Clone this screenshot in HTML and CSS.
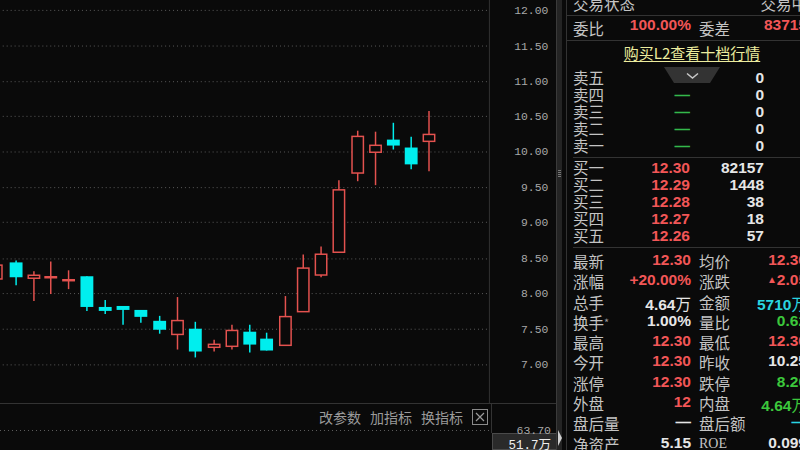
FILE: index.html
```html
<!DOCTYPE html>
<html lang="zh-CN">
<head>
    <meta charset="UTF-8">
    <meta name="viewport" content="width=device-width, initial-scale=1.0">
    <title>日K线</title>
    <link rel="stylesheet" href="styles.css">
</head>
<body>
<div class="screen">
    <div class="chart">
        <svg class="kline" width="556" height="407" viewBox="0 0 556 407">
            <!-- price grid, 0.50 per step -->
            <g class="grid">
                <line x1="0" y1="10.5" x2="491" y2="10.5"/>
                <line x1="0" y1="46.5" x2="491" y2="46.5"/>
                <line x1="0" y1="82.5" x2="491" y2="82.5"/>
                <line x1="0" y1="117.5" x2="491" y2="117.5"/>
                <line x1="0" y1="153.5" x2="491" y2="153.5"/>
                <line x1="0" y1="189.5" x2="491" y2="189.5"/>
                <line x1="0" y1="224.5" x2="491" y2="224.5"/>
                <line x1="0" y1="261.5" x2="491" y2="261.5"/>
                <line x1="0" y1="296.5" x2="491" y2="296.5"/>
                <line x1="0" y1="332.5" x2="491" y2="332.5"/>
                <line x1="0" y1="368.5" x2="491" y2="368.5"/>
            </g>
            <line class="edge" x1="491.5" y1="0" x2="491.5" y2="407"/>
            <g class="axis">
                <text x="551" y="14">12.00</text>
                <text x="551" y="50">11.50</text>
                <text x="551" y="86">11.00</text>
                <text x="551" y="121">10.50</text>
                <text x="551" y="157">10.00</text>
                <text x="551" y="193">9.50</text>
                <text x="551" y="228">9.00</text>
                <text x="551" y="265">8.50</text>
                <text x="551" y="300">8.00</text>
                <text x="551" y="336">7.50</text>
                <text x="551" y="372">7.00</text>
            </g>

            <!-- falling days -->
            <g class="down">
                <line x1="13.5" y1="263" x2="13.5" y2="288"/><rect x="7" y="265" width="13" height="15"/>
                <line x1="85" y1="279" x2="85" y2="314"/><rect x="78.5" y="279" width="13" height="31"/>
                <line x1="103.5" y1="303" x2="103.5" y2="317"/><rect x="97" y="310" width="13" height="4"/>
                <line x1="121.5" y1="309" x2="121.5" y2="328"/><rect x="115" y="309" width="13" height="4"/>
                <line x1="139.5" y1="313" x2="139.5" y2="326"/><rect x="133" y="313" width="13" height="7"/>
                <line x1="158.5" y1="319" x2="158.5" y2="337"/><rect x="152" y="324" width="13" height="9"/>
                <line x1="194.5" y1="325" x2="194.5" y2="361"/><rect x="188" y="332" width="13" height="23"/>
                <line x1="249.5" y1="328" x2="249.5" y2="356"/><rect x="243" y="335" width="13" height="13"/>
                <line x1="266.5" y1="336" x2="266.5" y2="354"/><rect x="260" y="342" width="13" height="12"/>
                <line x1="394.5" y1="124" x2="394.5" y2="151"/><rect x="388" y="141" width="13" height="6"/>
                <line x1="412.5" y1="138" x2="412.5" y2="171"/><rect x="406" y="149" width="13" height="17"/>
            </g>

            <!-- rising days, hollow -->
            <g class="up">
                <line x1="-6.5" y1="262" x2="-6.5" y2="290"/><rect x="-12.25" y="267.75" width="11.5" height="14"/>
                <line x1="31.5" y1="274" x2="31.5" y2="304"/><rect x="25.75" y="278" width="11.5" height="3"/>
                <line x1="48.5" y1="264" x2="48.5" y2="297"/><rect x="42.75" y="279.5" width="11.5" height="1"/>
                <line x1="66.5" y1="273" x2="66.5" y2="292"/><rect x="60.75" y="282.5" width="11.5" height="1"/>
                <line x1="176.5" y1="300" x2="176.5" y2="353"/><rect x="170.75" y="323.75" width="11.5" height="14"/>
                <line x1="213.5" y1="343" x2="213.5" y2="355"/><rect x="207.75" y="347.75" width="11.5" height="3"/>
                <line x1="231.5" y1="328" x2="231.5" y2="353"/><rect x="225.75" y="333.75" width="11.5" height="16"/>
                <line x1="285.5" y1="299" x2="285.5" y2="349"/><rect x="279.75" y="319.75" width="11.5" height="29"/>
                <line x1="303.5" y1="257" x2="303.5" y2="315"/><rect x="297.75" y="270.75" width="11.5" height="44"/>
                <line x1="321.5" y1="249" x2="321.5" y2="280"/><rect x="315.75" y="256.75" width="11.5" height="21"/>
                <line x1="339.5" y1="182" x2="339.5" y2="255"/><rect x="333.75" y="191.75" width="11.5" height="63"/>
                <line x1="358.5" y1="132" x2="358.5" y2="183"/><rect x="352.75" y="137.75" width="11.5" height="37"/>
                <line x1="376.5" y1="133" x2="376.5" y2="187"/><rect x="370.75" y="146.75" width="11.5" height="7"/>
                <line x1="430.5" y1="112" x2="430.5" y2="173"/><rect x="424.75" y="135.75" width="11.5" height="7"/>
            </g>
        </svg>

        <div class="sub">
            <div class="sub-plot">
                <div class="tools">
                    <span>改参数</span>
                    <span>加指标</span>
                    <span>换指标</span>
                    <span class="close">
                        <svg width="14" height="14" viewBox="0 0 14 14"><path d="M3 3 L11 11 M11 3 L3 11"/></svg>
                    </span>
                </div>
                <div class="sub-grid"></div>
            </div>
            <div class="sub-axis">
                <div class="sub-val">63.70</div>
                <div class="vol-tag">51.7万</div>
            </div>
        </div>
    </div>

    <div class="splitter">
        <span class="grip"></span>
        <span class="fold"></span>
    </div>

    <div class="panel">
        <div class="status">
            <span>交易状态</span>
            <span>交易中</span>
        </div>
        <div class="quote ratio">
            <span class="lbl">委比</span><span class="num red">100.00%</span>
            <span class="lbl">委差</span><span class="num red">83715</span>
        </div>
        <div class="l2"><a class="l2-link">购买L2查看十档行情</a></div>

        <svg class="fold-tab" width="56" height="16" viewBox="0 0 56 16">
            <polygon points="0,0 56,0 46,16 10,16"/>
            <polyline points="23,6.5 28.5,11 34,6.5"/>
        </svg>

        <div class="book sell">
            <div class="level"><span class="lbl">卖五</span><span class="num green">—</span><span class="num white">0</span></div>
            <div class="level"><span class="lbl">卖四</span><span class="num green">—</span><span class="num white">0</span></div>
            <div class="level"><span class="lbl">卖三</span><span class="num green">—</span><span class="num white">0</span></div>
            <div class="level"><span class="lbl">卖二</span><span class="num green">—</span><span class="num white">0</span></div>
            <div class="level"><span class="lbl">卖一</span><span class="num green">—</span><span class="num white">0</span></div>
        </div>
        <div class="book buy">
            <div class="level"><span class="lbl">买一</span><span class="num red">12.30</span><span class="num white">82157</span></div>
            <div class="level"><span class="lbl">买二</span><span class="num red">12.29</span><span class="num white">1448</span></div>
            <div class="level"><span class="lbl">买三</span><span class="num red">12.28</span><span class="num white">38</span></div>
            <div class="level"><span class="lbl">买四</span><span class="num red">12.27</span><span class="num white">18</span></div>
            <div class="level"><span class="lbl">买五</span><span class="num red">12.26</span><span class="num white">57</span></div>
        </div>

        <div class="stats">
            <div class="quote"><span class="lbl">最新</span><span class="num red">12.30</span><span class="lbl">均价</span><span class="num red">12.30</span></div>
            <div class="quote"><span class="lbl">涨幅</span><span class="num red">+20.00%</span><span class="lbl">涨跌</span><span class="num red"><span class="tri">▲</span>2.05</span></div>
            <div class="quote"><span class="lbl">总手</span><span class="num white">4.64<span class="unit">万</span></span><span class="lbl">金额</span><span class="num cyan">5710<span class="unit">万</span></span></div>
            <div class="quote"><span class="lbl">换手<span class="star">*</span></span><span class="num white">1.00%</span><span class="lbl">量比</span><span class="num green">0.62</span></div>
            <div class="quote"><span class="lbl">最高</span><span class="num red">12.30</span><span class="lbl">最低</span><span class="num red">12.30</span></div>
            <div class="quote"><span class="lbl">今开</span><span class="num red">12.30</span><span class="lbl">昨收</span><span class="num white">10.25</span></div>
            <div class="quote"><span class="lbl">涨停</span><span class="num red">12.30</span><span class="lbl">跌停</span><span class="num green">8.20</span></div>
            <div class="quote"><span class="lbl">外盘</span><span class="num red">12</span><span class="lbl">内盘</span><span class="num green">4.64<span class="unit">万</span></span></div>
            <div class="quote"><span class="lbl">盘后量</span><span class="num white">—</span><span class="lbl">盘后额</span><span class="num cyan">—</span></div>
            <div class="quote"><span class="lbl">净资产</span><span class="num white">5.15</span><span class="lbl latin">ROE</span><span class="num white">0.099</span></div>
        </div>
    </div>
</div>
</body>
</html>
```

FILE: styles.css
```css
* {
    box-sizing: border-box;
}
html, body {
    margin: 0;
    height: 100%;
}
body {
    background: #0a0a0a;
    overflow: hidden;
    font-family: "Noto Sans CJK SC", sans-serif;
    color: #c4c4c4;
}
.screen {
    display: flex;
    width: 807px;
    height: 450px;
}

/* chart */
.chart {
    width: 556px;
    flex: none;
    display: flex;
    flex-direction: column;
}
.kline {
    display: block;
}
.grid line {
    stroke: #5c5c5c;
    stroke-dasharray: 1 3;
}
.edge {
    stroke: #333;
}
.axis text {
    fill: #a8a8a8;
    font: 11.5px "Liberation Mono", monospace;
    text-anchor: end;
}
.down line {
    stroke: #00eeee;
    stroke-width: 1.5;
}
.down rect {
    fill: #00eeee;
}
.up line,
.up rect {
    stroke: #e4524f;
    stroke-width: 1.5;
    fill: #0a0a0a;
}

.sub {
    flex: 1;
    display: flex;
    border-top: 1px solid #333;
}
.sub-plot {
    width: 492px;
    height: 29px;
    border-right: 1px solid #333;
}
.tools {
    height: 26px;
    display: flex;
    justify-content: flex-end;
    align-items: center;
    gap: 9px;
    padding-right: 3px;
    font-size: 14px;
    color: #9a9a9a;
}
.close {
    width: 16px;
    height: 16px;
    border: 1px solid #8a8a8a;
    display: flex;
    align-items: center;
    justify-content: center;
}
.close path {
    stroke: #9a9a9a;
    stroke-width: 1.2;
    fill: none;
}
.sub-grid {
    height: 1px;
    background: repeating-linear-gradient(to right, #5c5c5c 0 1px, transparent 1px 4px);
}
.sub-axis {
    width: 64px;
    padding-top: 20px;
}
.sub-val {
    height: 12px;
    line-height: 12px;
    padding-right: 5px;
    text-align: right;
    font: 11.5px "Liberation Mono", monospace;
    color: #a8a8a8;
}
.vol-tag {
    margin-top: -3px;
    height: 17px;
    line-height: 15px;
    padding-right: 5px;
    text-align: right;
    background: #2a2a2a;
    border: 1px solid #4a4a4a;
    border-right: none;
    font: 12.5px "Liberation Mono", "Noto Sans CJK SC", monospace;
    color: #eeeeee;
}

/* splitter between chart and quote panel */
.splitter {
    width: 6px;
    flex: none;
    display: flex;
    flex-direction: column;
    align-items: center;
    background: #242424;
    border-left: 1px solid #3a3a3a;
}
.grip {
    margin-top: 170px;
    width: 3px;
    height: 7px;
    background: repeating-linear-gradient(to bottom, #777 0 1px, transparent 1px 2px);
}
.fold {
    margin-top: auto;
    margin-bottom: 4px;
    width: 0;
    height: 0;
    border-left: 4px solid #cfcfcf;
    border-top: 8px solid transparent;
    border-bottom: 8px solid transparent;
}

/* quote panel */
.panel {
    position: relative;
    width: 241px;
    flex: none;
    margin-left: 4px;
    border-left: 1px solid #333;
}
.lbl {
    font-size: 15.5px;
    color: #c4c4c4;
    white-space: nowrap;
}
.lbl.latin {
    font-family: "Liberation Serif", serif;
    font-size: 14px;
}
.star {
    font-size: 11px;
    color: #999;
    vertical-align: top;
}
.num {
    font: bold 15.5px "Liberation Sans", "Noto Sans CJK SC", sans-serif;
    text-align: right;
    white-space: nowrap;
}
.unit {
    font-weight: normal;
}
.tri {
    font-size: 10px;
    vertical-align: 2px;
}
.red { color: #f25657; }
.white { color: #e6e6e6; }
.green { color: #3cc83c; }
.cyan { color: #2ad6e0; }
.book .green { color: #34b84c; }

.status {
    margin-top: -5px;
    height: 21px;
    line-height: 16px;
    padding-left: 6px;
    display: flex;
    justify-content: space-between;
    font-size: 15.5px;
    border-bottom: 1px solid #333;
}
/* label | value | label | value, the second pair set 8px apart */
.quote {
    display: grid;
    grid-template-columns: 50px 68px 66px 50px;
    padding-left: 6px;
    height: 20.3px;
    line-height: 20.3px;
}
.quote .lbl:nth-child(3) {
    padding-left: 8px;
}
.ratio {
    height: 25px;
    line-height: 24px;
    border-bottom: 1px solid #333;
}
.l2 {
    height: 26px;
    line-height: 22px;
    padding-left: 10px;
    text-align: center;
}
.l2-link {
    font-size: 15px;
    color: #ecec9e;
    text-decoration: underline;
    text-underline-offset: 2px;
    cursor: pointer;
}
.fold-tab {
    position: absolute;
    left: 97px;
    top: 67px;
    z-index: 1;
}
.fold-tab polygon {
    fill: #333;
}
.fold-tab polyline {
    fill: none;
    stroke: #c8c8c8;
    stroke-width: 1.5;
}

.book {
    margin-left: 6px;
    border-bottom: 1px solid #333;
}
.sell {
    padding: 2px 0 3px;
}
.buy {
    padding: 1px 0 3px;
}
.level {
    display: grid;
    grid-template-columns: 50px 67px 74px;
    height: 17px;
    line-height: 17px;
}
.stats {
    padding-top: 3px;
}
```
